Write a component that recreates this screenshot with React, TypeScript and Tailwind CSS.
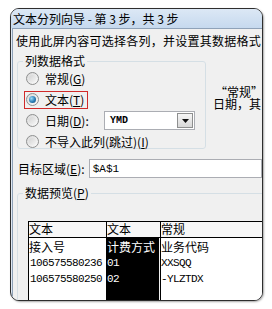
import React from "react";

function Radio({ checked }: { checked?: boolean }) {
  return (
    <span className="flex h-[13px] w-[13px] shrink-0 items-center justify-center rounded-full border border-[#8e8f8f] bg-linear-to-br from-[#d9d9d9] to-[#fbfbfb]">
      {checked ? (
        <span className="h-[7px] w-[7px] rounded-full bg-[radial-gradient(circle_at_35%_35%,#9fdcf8,#2a7db5_55%,#164a72)]" />
      ) : (
        <span className="h-[7px] w-[7px] rounded-full bg-linear-to-br from-[#d4d4d4] to-[#f4f4f4]" />
      )}
    </span>
  );
}

const cjk = "font-['Noto_Sans_CJK_SC','Liberation_Sans',sans-serif]";
const mono = "font-['Liberation_Mono','DejaVu_Sans_Mono',monospace]";
const num = `text-[11px] tracking-[-0.6px] ${mono}`;

export default function App() {
  return (
    <div className={`h-[309px] w-[272px] bg-white pl-[10px] pt-[8px] text-black ${cjk}`}>
      <div className="flex h-[293px] w-[253px] flex-col overflow-hidden rounded-[9px] border border-[#2e2e2e] bg-[#dfe8f3] shadow-[1px_1px_2px_rgba(0,0,0,0.35)]">
        {/* title bar */}
        <div className="flex h-[19px] shrink-0 items-center bg-linear-to-b from-[#dce8f5] to-[#c6d9ee] pl-[2px] text-[12px] leading-[14px] whitespace-nowrap">
          文本分列向导 - 第 3 步，共 3 步
        </div>
        {/* content */}
        <div className="ml-[1px] flex-1 border-l border-t border-[#8fa2b8] bg-[#f0f0f0] text-[12px] leading-[14px]">
          <div className="pl-[3px] pt-[5px] whitespace-nowrap tracking-[0.25px]">
            使用此屏内容可选择各列，并设置其数据格式
          </div>

          <div className="mt-[6px] flex">
            <fieldset className="ml-[4px] h-[95px] w-[189px] shrink-0 rounded-[3px] border border-[#d5dfe5]">
              <legend className="ml-[5px] px-[2px] whitespace-nowrap">列数据格式</legend>
              <div className="flex flex-col">
                <div className="flex h-[21px] items-center pl-[8px]">
                  <Radio />
                  <span className="ml-[6px] whitespace-nowrap">
                    常规(<u>G</u>)
                  </span>
                </div>
                <div className="flex h-[21px] items-center pl-[6px]">
                  <div className="flex h-[18px] items-center border border-[#d02a2a] pl-[1px] pr-[3px]">
                    <Radio checked />
                    <span className="ml-[6px] whitespace-nowrap">
                      文本(<u>T</u>)
                    </span>
                  </div>
                </div>
                <div className="flex h-[21px] items-center pl-[8px]">
                  <Radio />
                  <span className="ml-[6px] w-[59px] whitespace-nowrap">
                    日期(<u>D</u>):
                  </span>
                  <div className="flex h-[19px] w-[91px] items-center border border-[#abadb3] bg-white">
                    <span className={`flex-1 pl-[5px] text-[10px] font-bold ${mono}`}>YMD</span>
                    <span className="mr-[1px] flex h-[15px] w-[16px] items-center justify-center border border-[#8e8f8f] bg-linear-to-b from-[#f6f6f6] to-[#d8d8d8]">
                      <svg width="7" height="4" viewBox="0 0 7 4">
                        <path d="M0 0H7L3.5 4Z" fill="#111" />
                      </svg>
                    </span>
                  </div>
                </div>
                <div className="flex h-[21px] items-center pl-[8px]">
                  <Radio />
                  <span className="ml-[6px] whitespace-nowrap">
                    不导入此列(跳过)(<u>I</u>)
                  </span>
                </div>
              </div>
            </fieldset>
            <div className="ml-[7px] w-[50px] pt-[32px] text-[12px] leading-[12px] whitespace-nowrap">
              <div className="pl-[2px]">“常规”</div>
              <div>日期，其</div>
            </div>
          </div>

          <div className="mt-[10px] flex h-[19px] items-center pl-[5px]">
            <span className="w-[82px] whitespace-nowrap">
              目标区域(<u>E</u>):
            </span>
            <div className={`flex h-[19px] w-[200px] items-center border border-[#abadb3] bg-white pl-[3px] text-[11px] ${mono}`}>
              $A$1
            </div>
          </div>

          <fieldset className="ml-[4px] mt-[8px] h-[200px] w-[260px] rounded-[3px] border border-[#d5dfe5]">
            <legend className="ml-[5px] px-[2px] whitespace-nowrap">
              数据预览(<u>P</u>)
            </legend>
            <div className="ml-[10px] mt-[21px] flex flex-col border-l border-t border-black">
              <div className="flex h-[16px] border-b border-black bg-[#f7f7f7] leading-[14px]">
                <div className="w-[77px]">文本</div>
                <div className="w-[54px] border-l border-black">文本</div>
                <div className="w-[110px] border-l border-black">常规</div>
              </div>
              <div className="flex h-[80px]">
                <div className="flex w-[77px] flex-col bg-white">
                  <div className="flex h-[17px] items-center">接入号</div>
                  <div className={`flex h-[16px] items-center pl-[1px] ${num}`}>106575580236</div>
                  <div className={`flex h-[16px] items-center pl-[1px] ${num}`}>106575580250</div>
                </div>
                <div className="flex w-[53px] flex-col bg-black pl-[1px] text-white">
                  <div className="flex h-[17px] items-center whitespace-nowrap">计费方式</div>
                  <div className={`flex h-[16px] items-center ${num}`}>01</div>
                  <div className={`flex h-[16px] items-center ${num}`}>02</div>
                </div>
                <div className="ml-[1px] flex w-[110px] flex-col border-l border-black bg-white">
                  <div className="flex h-[17px] items-center whitespace-nowrap">业务代码</div>
                  <div className={`flex h-[16px] items-center ${num}`}>XXSQQ</div>
                  <div className={`flex h-[16px] items-center ${num}`}>-YLZTDX</div>
                </div>
              </div>
            </div>
          </fieldset>
        </div>
      </div>
    </div>
  );
}
